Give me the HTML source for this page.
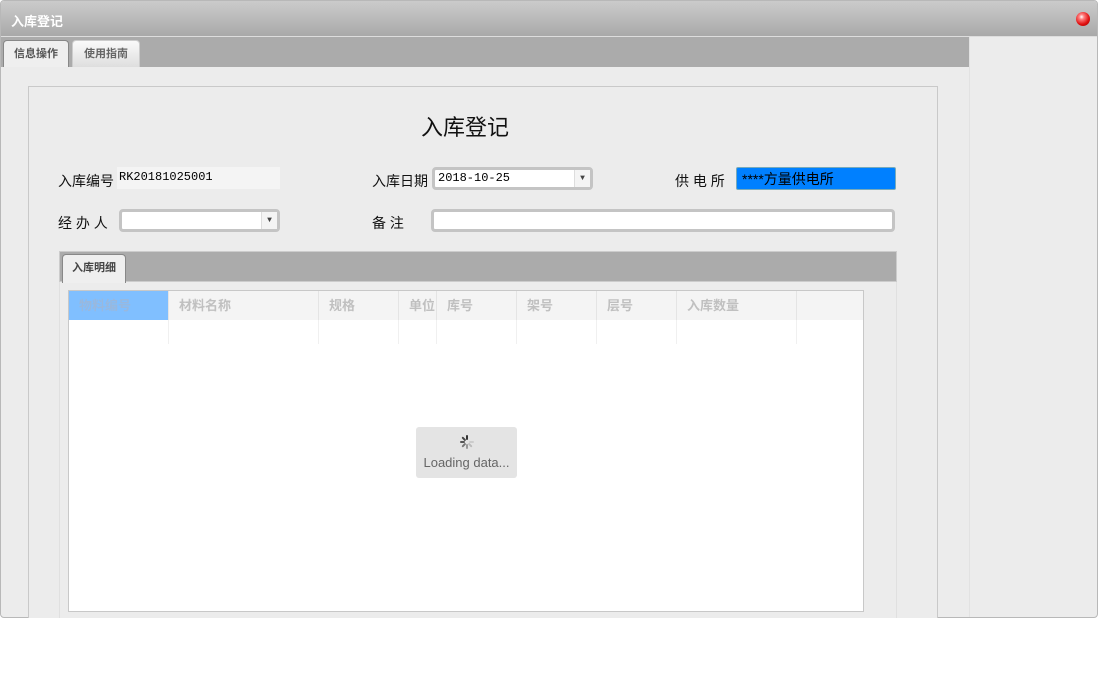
<!DOCTYPE html>
<html><head><meta charset="utf-8"><style>
*{box-sizing:border-box;margin:0;padding:0}
body{width:1098px;height:687px;background:#fff;font-family:"Liberation Sans","Noto Sans CJK SC",sans-serif;position:relative;overflow:hidden}
.clip{position:absolute;left:0;top:0;width:1098px;height:618px;overflow:hidden}
.win{position:absolute;left:0;top:0;width:1098px;height:618px;background:#ececec;border:1px solid #b8b8b8;border-radius:4px;overflow:hidden}
.title{position:absolute;left:0;top:0;width:1098px;height:36px;background:linear-gradient(#cbcbcb,#a9a9a9);border-bottom:1px solid #ddd}
.title span{position:absolute;left:10px;top:10px;color:#fff;font-size:13px;font-weight:bold}
.close{position:absolute;left:1075px;top:11px;width:14px;height:14px;border-radius:50%;background:radial-gradient(circle at 40% 35%,#fff 0,#ff8080 20%,#e01010 60%,#900 100%)}
.tabs{position:absolute;left:0;top:36px;width:968px;height:30px;background:#ababab}
.tab{position:absolute;top:3px;height:27px;font-size:11px;font-weight:bold;color:#666;text-align:center;line-height:26px;border-radius:4px 4px 0 0}
.t1{left:2px;width:66px;background:#efefef;border:1px solid #888;border-bottom:none;color:#555}
.t2{left:71px;width:68px;background:linear-gradient(#fafafa,#dedede);border:1px solid #ccc;border-bottom:none}
.rcol{position:absolute;left:968px;top:36px;width:130px;height:580px;border-left:1px solid #e2e2e2}
.panel{position:absolute;left:28px;top:86px;width:910px;height:560px;border:1px solid #c9c9c9;background:#ececec}
.h1{position:absolute;left:421px;top:110px;font-size:22px;color:#111;white-space:nowrap}
.lbl{position:absolute;font-size:14px;color:#111;white-space:nowrap}
.inp{position:absolute;height:23px;border:3px solid #c4c4c4;border-radius:4px;background:#fff;font-family:"Liberation Mono","Noto Sans CJK SC",monospace;font-size:12px;line-height:17px;padding-left:3px}
.arr{position:absolute;right:0;top:0;width:16px;height:17px;background:#f4f4f4;border-left:1px solid #ddd;font-size:8px;text-align:center;line-height:17px;color:#444}
.itab{position:absolute;left:59px;top:251px;width:838px;height:31px;background:#ababab;border:1px solid #ccc}
.itab div{position:absolute;left:2px;top:2px;width:64px;height:29px;background:#efefef;border:1px solid #888;border-bottom:none;border-radius:4px 4px 0 0;font-size:11px;font-weight:bold;color:#444;line-height:26px;text-align:center}
.ibody{position:absolute;left:59px;top:282px;width:838px;height:340px;border-left:1px solid #e0e0e0;border-right:1px solid #e0e0e0}
.grid{position:absolute;left:68px;top:290px;width:796px;height:322px;background:#fff;border:1px solid #c8c8c8;overflow:hidden}
.hd{position:absolute;top:0;height:29px;background:#f4f4f4;border-right:1px solid #e4e4e4;font-size:13px;font-weight:bold;color:#c0c0c0;line-height:29px;padding-left:10px;overflow:hidden;white-space:nowrap}
.cl{position:absolute;top:29px;height:24px;border-right:1px solid #f0f0f0}
.load{position:absolute;left:416px;top:427px;width:101px;height:51px;background:#e4e4e4;border-radius:3px;font-size:13px;color:#666;text-align:center}
</style></head><body>
<div class="clip">
<div class="win">
<div class="title"><span>入库登记</span><div class="close"></div></div>
<div class="tabs"><div class="tab t1">信息操作</div><div class="tab t2">使用指南</div></div>
<div class="rcol"></div>
</div>
<div class="panel"></div>
<div class="h1">入库登记</div>
<div class="lbl" style="left:58px;top:171px">入库编号</div>
<div style="position:absolute;left:117px;top:167px;width:163px;height:22px;background:#f4f4f4;font-family:'Liberation Mono',monospace;font-size:12px;line-height:20px;padding-left:2px">RK20181025001</div>
<div class="lbl" style="left:372px;top:171px">入库日期</div>
<div class="inp" style="left:432px;top:167px;width:161px">2018-10-25<div class="arr">▼</div></div>
<div class="lbl" style="left:675px;top:171px">供 电 所</div>
<div style="position:absolute;left:736px;top:167px;width:160px;height:23px;background:#0080ff;border:1px solid #7ab;border-radius:2px;font-size:14px;line-height:22px;padding-left:5px;color:#000">****方量供电所</div>
<div class="lbl" style="left:58px;top:213px">经 办 人</div>
<div class="inp" style="left:119px;top:209px;width:161px"><div class="arr">▼</div></div>
<div class="lbl" style="left:372px;top:213px">备 注</div>
<div class="inp" style="left:431px;top:209px;width:464px"></div>
<div class="itab"><div>入库明细</div></div>
<div class="ibody"></div>
<div class="grid">
<div class="hd" style="left:0;width:100px;background:#80bfff;color:#99b8dd">物料编号</div>
<div class="hd" style="left:100px;width:150px">材料名称</div>
<div class="hd" style="left:250px;width:80px">规格</div>
<div class="hd" style="left:330px;width:38px">单位</div>
<div class="hd" style="left:368px;width:80px">库号</div>
<div class="hd" style="left:448px;width:80px">架号</div>
<div class="hd" style="left:528px;width:80px">层号</div>
<div class="hd" style="left:608px;width:120px">入库数量</div>
<div class="hd" style="left:728px;width:68px;border-right:none"></div>
<div class="cl" style="left:0;width:100px"></div><div class="cl" style="left:100px;width:150px"></div><div class="cl" style="left:250px;width:80px"></div><div class="cl" style="left:330px;width:38px"></div><div class="cl" style="left:368px;width:80px"></div><div class="cl" style="left:448px;width:80px"></div><div class="cl" style="left:528px;width:80px"></div><div class="cl" style="left:608px;width:120px"></div>
</div>
<div class="load"><svg width="16" height="16" viewBox="0 0 16 16" style="margin-top:7px"><g stroke-width="2" stroke-linecap="round"><line x1="8" y1="2" x2="8" y2="5" stroke="#333"/><line x1="3.8" y1="3.8" x2="5.9" y2="5.9" stroke="#444"/><line x1="2" y1="8" x2="5" y2="8" stroke="#555"/><line x1="3.8" y1="12.2" x2="5.9" y2="10.1" stroke="#777"/><line x1="8" y1="14" x2="8" y2="11" stroke="#999"/><line x1="12.2" y1="12.2" x2="10.1" y2="10.1" stroke="#bbb"/><line x1="14" y1="8" x2="11" y2="8" stroke="#ccc"/></g></svg><div style="margin-top:2px">Loading data...</div></div>
</div>
</body></html>
